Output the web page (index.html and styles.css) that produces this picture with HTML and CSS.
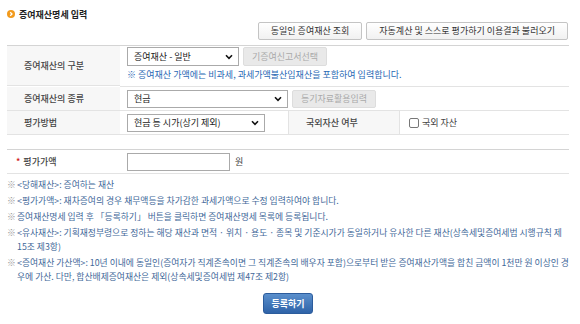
FILE: index.html
```html
<!DOCTYPE html>
<html>

<head>
    <title>증여재산명세 입력</title>
    <link rel="stylesheet" href="styles.css">
</head>

<body>
    <div class="page">
        <h2 class="title">
            <svg class="bullet" width="8" height="8" viewBox="0 0 8 8">
                <circle cx="4" cy="4" r="4" fill="#f29a1c" />
                <path d="M3.2 2.2 L5 4 L3.2 5.8" fill="none" stroke="#fff" stroke-width="1.3" />
            </svg>
            증여재산명세 입력
        </h2>

        <div class="toolbar">
            <button class="btn">동일인 증여재산 조회</button>
            <button class="btn">자동계산 및 스스로 평가하기 이용결과 불러오기</button>
        </div>

        <div class="form">
            <div class="th row-tall">증여재산의 구분</div>
            <div class="td span3 row-tall stack">
                <div class="line">
                    <div class="select sel-kind">
                        <span>증여재산 - 일반</span>
                        <svg width="8" height="6" viewBox="0 0 8 6"><path d="M1 1.3 L4 4.3 L7 1.3" fill="none" stroke="#111" stroke-width="1.6" /></svg>
                    </div>
                    <button class="btn-off btn-wide">기증여신고서선택</button>
                </div>
                <p class="hint">※ 증여재산 가액에는 비과세, 과세가액불산입재산을 포함하여 입력합니다.</p>
            </div>

            <div class="th">증여재산의 종류</div>
            <div class="td span3">
                <div class="line">
                    <div class="select sel-type">
                        <span>현금</span>
                        <svg width="8" height="6" viewBox="0 0 8 6"><path d="M1 1.3 L4 4.3 L7 1.3" fill="none" stroke="#111" stroke-width="1.6" /></svg>
                    </div>
                    <button class="btn-off btn-reg">등기자료활용입력</button>
                </div>
            </div>

            <div class="th">평가방법</div>
            <div class="td">
                <div class="select sel-method">
                    <span>현금 등 시가(상기 제외)</span>
                    <svg width="8" height="6" viewBox="0 0 8 6"><path d="M1 1.3 L4 4.3 L7 1.3" fill="none" stroke="#111" stroke-width="1.6" /></svg>
                </div>
            </div>
            <div class="th th-mid">국외자산 여부</div>
            <div class="td">
                <label class="check"><input type="checkbox"> 국외 자산</label>
            </div>
        </div>

        <div class="form form-amount">
            <div class="th"><span class="req">*</span> 평가가액</div>
            <div class="td">
                <input type="text" class="amount">
                <span class="unit">원</span>
            </div>
        </div>

        <ul class="notes">
            <li><span class="mark">※</span><span>&lt;당해재산&gt;: 증여하는 재산</span></li>
            <li><span class="mark">※</span><span>&lt;평가가액&gt;: 재차증여의 경우 채무액등을 차가감한 과세가액으로 수정 입력하여야 합니다.</span></li>
            <li><span class="mark">※</span><span>증여재산명세 입력 후 「등록하기」 버튼을 클릭하면 증여재산명세 목록에 등록됩니다.</span></li>
            <li><span class="mark">※</span><span>&lt;유사재산&gt;: 기획재정부령으로 정하는 해당 재산과 면적 · 위치 · 용도 · 종목 및 기준시가가 동일하거나 유사한 다른 재산(상속세및증여세법 시행규칙 제15조 제3항)</span></li>
            <li><span class="mark">※</span><span>&lt;증여재산 가산액&gt;: 10년 이내에 동일인(증여자가 직계존속이면 그 직계존속의 배우자 포함)으로부터 받은 증여재산가액을 합친 금액이 1천만 원 이상인 경우에 가산. 다만, 합산배제증여재산은 제외(상속세및증여세법 제47조 제2항)</span></li>
        </ul>

        <div class="actions">
            <button class="btn-primary">등록하기</button>
        </div>
    </div>
</body>

</html>
```

FILE: styles.css
```css
body {
    margin: 0;
    font-family: "Noto Sans CJK KR", "Noto Sans", sans-serif;
    font-size: 9px;
    color: #333;
    background-color: #fff;
}

.page {
    padding: 6px 11px 0 7px;
}

.title {
    display: flex;
    align-items: center;
    gap: 4px;
    height: 16px;
    margin: 0;
    font-size: 9px;
    font-weight: bold;
    color: #222;
}

.toolbar {
    display: flex;
    justify-content: flex-end;
    gap: 4px;
    margin-right: 1px;
    margin-bottom: 5px;
}

.btn {
    height: 18px;
    padding: 0 12px;
    font-family: inherit;
    font-size: 9px;
    line-height: 16px;
    color: #333;
    background: linear-gradient(#fff, #f1f1f1);
    border: 1px solid #c4c4c4;
    border-radius: 2px;
}

/* form grid */
.form {
    display: grid;
    grid-template-columns: 113px 168px 112px 1fr;
    border-top: 1px solid #d4d4d4;
}

.form-amount {
    grid-template-columns: 113px 1fr;
    margin-top: 14px;
}

.th {
    display: flex;
    align-items: center;
    padding-left: 17px;
    height: 23px;
    font-weight: 500;
    color: #444;
    background-color: #f7f7f7;
    border-bottom: 1px solid #e3e3e3;
}

.th-mid {
    border-left: 1px solid #e3e3e3;
    border-right: 1px solid #e3e3e3;
}

.form-amount .th {
    padding-left: 9px;
    background-color: #fff;
}

.td {
    display: flex;
    align-items: center;
    padding-left: 7px;
    height: 23px;
    border-bottom: 1px solid #e3e3e3;
}

.span3 {
    grid-column: span 3;
}

.row-tall {
    height: 39px;
}

.stack {
    flex-direction: column;
    align-items: flex-start;
    justify-content: flex-start;
    padding-top: 1px;
}

.line {
    display: flex;
    align-items: center;
    gap: 4px;
}

.select {
    display: flex;
    align-items: center;
    justify-content: space-between;
    box-sizing: border-box;
    height: 18px;
    padding: 0 5px 0 6px;
    color: #222;
    background-color: #fff;
    border: 1px solid #aaa;
}

.sel-kind {
    width: 112px;
    height: 19px;
}

.sel-type {
    width: 161px;
}

.sel-method {
    width: 138px;
}

.btn-off {
    box-sizing: border-box;
    width: 84px;
    height: 18px;
    padding: 0;
    font-family: inherit;
    font-size: 9px;
    color: #a9a9a9;
    background-color: #e9e9e9;
    border: 1px solid #ddd;
    border-radius: 2px;
}

.btn-wide {
    height: 19px;
}

.hint {
    margin: 3px 0 0;
    line-height: 12px;
    color: #2868b4;
}

.check {
    display: flex;
    align-items: center;
    gap: 3px;
    padding-left: 2px;
    color: #444;
}

.check input {
    appearance: none;
    width: 10px;
    height: 10px;
    margin: 0;
    border: 1px solid #777;
    border-radius: 2px;
    background-color: #fff;
}

.req {
    color: #d01818;
    margin-right: 3px;
}

.amount {
    box-sizing: border-box;
    width: 103px;
    height: 18px;
    border: 1px solid #aaa;
    margin: 0;
}

.unit {
    margin-left: 5px;
    color: #444;
}

/* notes */
.notes {
    list-style: none;
    margin: 4px 0 0;
    padding: 0;
    font-size: 8.8px;
    line-height: 14px;
    color: #3f6899;
}

.notes li {
    display: flex;
    margin-bottom: 2px;
}

.mark {
    flex: none;
    width: 10px;
    color: #999;
}

.actions {
    display: flex;
    justify-content: center;
    margin-top: 9px;
}

.btn-primary {
    width: 50px;
    height: 21px;
    padding: 0;
    font-family: inherit;
    font-size: 9px;
    font-weight: bold;
    color: #fff;
    background: linear-gradient(#5a8fcc, #2f63a8);
    border: 1px solid #2c5c9c;
    border-radius: 3px;
}
```
